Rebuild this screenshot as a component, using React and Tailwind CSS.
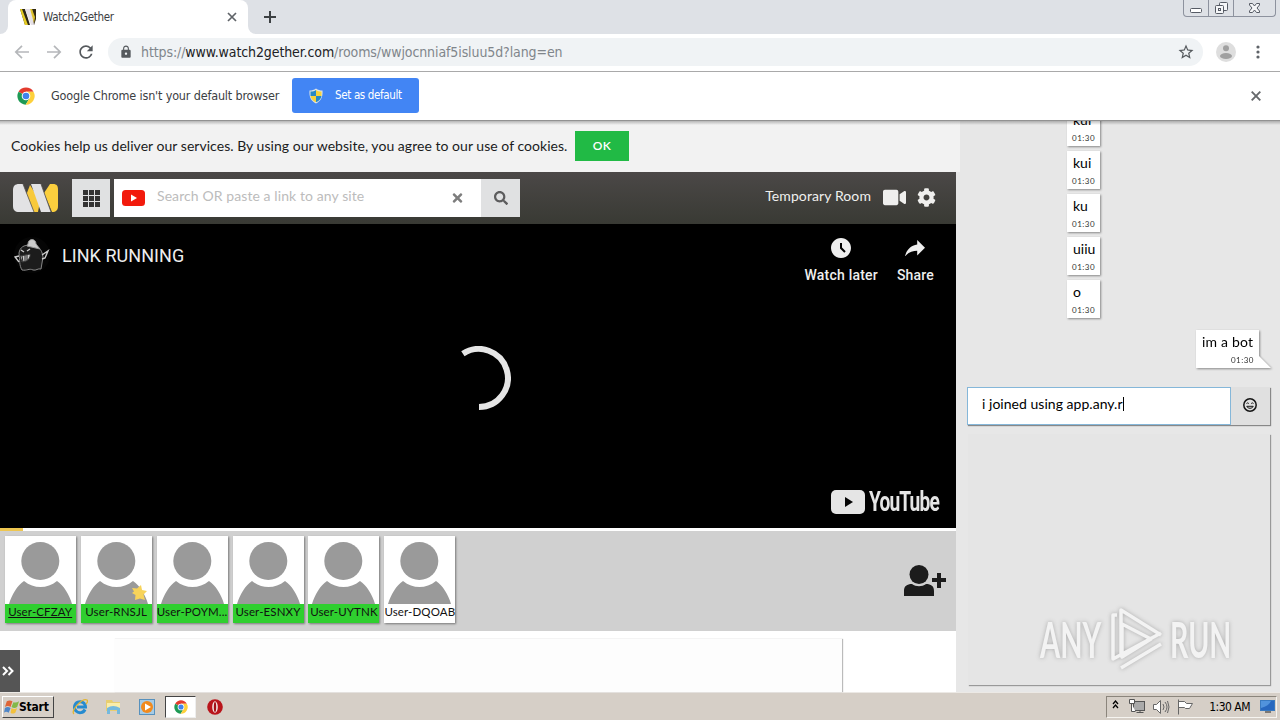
import React from "react";
import { FaCog, FaSearch, FaTimes, FaVideo } from "react-icons/fa";
import { MdAccessTimeFilled, MdLock, MdRefresh, MdStarBorder } from "react-icons/md";

const USERS = [
  { name: "User-CFZAY", online: true, me: true },
  { name: "User-RNSJL", online: true, leader: true },
  { name: "User-POYM...", online: true },
  { name: "User-ESNXY", online: true },
  { name: "User-UYTNK", online: true },
  { name: "User-DQOAB", online: false },
];

const MESSAGES = ["kui", "kui", "ku", "uiiu", "o"];

const ChromeLogo = ({ className }) => (
  <svg className={className} viewBox="0 0 48 48">
    <circle cx="24" cy="24" r="23" fill="#fff" />
    <path d="M24 24 4.1 12.5A23 23 0 0 1 43.9 12.5H24Z" fill="#e33b2e" />
    <path d="M24 24 4.1 12.5A23 23 0 0 0 23 47l11-18Z" fill="#1e9a55" />
    <path d="M24 12.5h19.9A23 23 0 0 1 23 47l11-18Z" fill="#fdd03b" />
    <circle cx="24" cy="24" r="11.5" fill="#fff" />
    <circle cx="24" cy="24" r="8.8" fill="#3f83ec" />
  </svg>
);

const Arrow = ({ flip }) => (
  <svg className={flip ? "w-4 h-4 rotate-180" : "w-4 h-4"} viewBox="0 0 16 16" fill="none" stroke="#b5b7ba" strokeWidth="1.7">
    <path d="M15 8H2M8 1.8 1.8 8 8 14.2" />
  </svg>
);

const TabStrip = () => (
  <div className="h-[34px] flex bg-[#dee1e6]">
    <div className="w-2 h-full bg-white">
      <div className="h-full bg-[#dee1e6] rounded-br-lg" />
    </div>
    <div className="w-[240px] h-full bg-white rounded-t-lg flex items-center pl-3 pr-[11px]">
      <svg className="w-4 h-4 shrink-0" viewBox="0 0 16 16">
        <path d="M0 0h5l5 16H5Z" fill="#2c2716" />
        <path d="M0 0h2l6 16H5Z" fill="#e4cb24" />
        <path d="M5 0h5l5 16h-4Z" fill="#e5e0e6" />
        <path d="M12 0h4v10l-2 6Z" fill="#302814" />
        <path d="M10 0h2l3 8-1 6Z" fill="#dcc02d" />
      </svg>
      <span className="ml-[7px] text-[11.5px] leading-4 tracking-[-0.3px] text-[#3c4043]">Watch2Gether</span>
      <svg className="w-[10px] h-[10px] ml-auto" viewBox="0 0 10 10" stroke="#5f6368" strokeWidth="1.7">
        <path d="m1 1 8 8M9 1 1 9" />
      </svg>
    </div>
    <div className="w-2 h-full bg-white">
      <div className="h-full bg-[#dee1e6] rounded-bl-lg" />
    </div>
    <svg className="w-3 h-3 mt-[11px] ml-2" viewBox="0 0 12 12" stroke="#3c4043" strokeWidth="2">
      <path d="M6 0v12M0 6h12" />
    </svg>
    <div className="ml-auto mr-1 w-[93px] h-[17px] flex border border-t-0 border-[#8d929e] rounded-b text-[#565b65]">
      <div className="w-[25px] border-r border-[#8d929e] flex justify-center">
        <svg className="w-3 h-4" viewBox="0 0 12 16" fill="#fff" stroke="currentColor">
          <rect x=".5" y="8.5" width="11" height="4" rx="1" />
        </svg>
      </div>
      <div className="w-[25px] border-r border-[#8d929e] flex justify-center">
        <svg className="w-[13px] h-4" viewBox="0 0 13 16" fill="#f5f6f8" stroke="currentColor">
          <rect x="4.5" y="2.5" width="8" height="8" rx="1" />
          <rect x=".5" y="5.5" width="8" height="8" rx="1" />
          <rect x="3.5" y="8.5" width="2" height="2" />
        </svg>
      </div>
      <div className="flex-1 flex justify-center">
        <svg className="w-[11px] h-4" viewBox="0 0 11 16" fill="#f5f6f8" stroke="currentColor">
          <path d="M.5 3.5h3l2 2.5 2-2.5h3V5L8 8l2.5 3v1.5h-3l-2-2.5-2 2.5h-3V11L3 8 .5 5Z" />
        </svg>
      </div>
    </div>
  </div>
);

const Toolbar = () => (
  <div className="h-[38px] flex items-center bg-white border-b border-[#a9a9aa]">
    <div className="flex items-center gap-4 pl-[14px] mb-px">
      <Arrow />
      <Arrow flip />
      <MdRefresh className="w-5 h-5 -ml-[2px] text-[#55595d]" />
    </div>
    <div className="ml-3 w-[1095px] h-7 mb-px rounded-full bg-[#f0f3f5] flex items-center pl-[11px] pr-2">
      <MdLock className="w-[14px] h-[14px] mb-px text-[#55595d]" />
      <span className="ml-2 mb-px text-[14px] leading-5 tracking-[-0.1px] text-[#80868b] whitespace-nowrap">
        https://<span className="text-[#202124]">www.watch2gether.com</span>/rooms/wwjocnniaf5isluu5d?lang=en
      </span>
      <MdStarBorder className="w-[18px] h-[18px] ml-auto mb-px text-[#55595d]" />
    </div>
    <svg className="w-5 h-5 ml-[13px] mb-[2px]" viewBox="0 0 20 20">
      <circle cx="10" cy="10" r="10" fill="#dedede" />
      <circle cx="10" cy="6.3" r="3" fill="#a0a0a0" />
      <ellipse cx="10" cy="14" rx="6" ry="3" fill="#a0a0a0" />
    </svg>
    <svg className="w-1 h-4 ml-5 mb-px" viewBox="0 0 4 16" fill="#5f6368">
      <circle cx="2" cy="3" r="1.6" />
      <circle cx="2" cy="8" r="1.6" />
      <circle cx="2" cy="13" r="1.6" />
    </svg>
  </div>
);

const InfoBar = () => (
  <div className="h-[49px] flex items-center bg-white border-b border-[#929292] pl-[17px] pr-[19px]">
    <ChromeLogo className="w-[18px] h-[18px]" />
    <span className="ml-4 w-[241px] mb-px text-[12.5px] leading-5 tracking-[-0.17px] text-[#3c4043] whitespace-nowrap">
      Google Chrome isn't your default browser
    </span>
    <button className="w-[127px] h-[35px] mb-px rounded-[3px] bg-[#4285f4] flex items-center pl-4 text-white text-[11.5px] tracking-[-0.35px] whitespace-nowrap">
      <svg className="w-4 h-4 mr-[11px]" viewBox="0 0 16 16">
        <path d="M8 .5C6 2 4 2.5 1.500 2.500 1 9 3 13 8 15.500 13 13 15 9 14.500 2.500 12 2.500 10 2 8 .5Z" fill="#dde4e6" />
        <path d="M8 2v6H2.500V3.500C5 3.500 6.500 3 8 2Z" fill="#2788c6" />
        <path d="M8 2v6h5.500V3.500C11 3.500 9.500 3 8 2Z" fill="#f6d23c" />
        <path d="M8 8v6.300C5 13 3 11 2.500 8Z" fill="#f6d23c" />
        <path d="M8 8v6.300C11 13 13 11 13.500 8Z" fill="#2788c6" />
      </svg>
      Set as default
    </button>
    <svg className="w-[10px] h-[10px] ml-auto" viewBox="0 0 10 10" stroke="#66696c" strokeWidth="1.9">
      <path d="m.7.7 8.6 8.6M9.3.7.7 9.3" />
    </svg>
  </div>
);

const RoomHeader = () => (
  <div className="w-[956px] h-[52px] bg-linear-to-b from-[#4b4847] to-[#393a34] flex items-center pl-[13px]">
    <svg className="w-[46px] h-7" viewBox="0 0 46 28">
      <path d="M17 1 12 14l7 14h6l2-11Z" fill="#f8c93b" />
      <path d="M37 0h3c4 0 5 2 5 6v16c0 4-2 6-6 6l-8-19Z" fill="#fbcf3e" />
      <path d="M6 0h4l11 28H6c-4 0-6-2-6-6V6c0-4 2-6 6-6Z" fill="#e2e2e4" />
      <path d="M18 0h10l10 28H28Z" fill="#e2e2e4" />
      <path d="m10 0 11 28M28 0l10 28" stroke="#55524e" strokeWidth=".8" />
    </svg>
    <div className="ml-[13px] w-[38px] h-[38px] bg-[#e0e1e2] flex items-center justify-center">
      <svg className="w-[17px] h-[17px]" viewBox="0 0 17 17" fill="#333">
        <path d="M0 0h5v5H0zM6 0h5v5H6zM12 0h5v5h-5zM0 6h5v5H0zM6 6h5v5H6zM12 6h5v5h-5zM0 12h5v5H0zM6 12h5v5H6zM12 12h5v5h-5z" />
      </svg>
    </div>
    <div className="ml-1 w-[367px] h-[38px] bg-white flex items-center pl-2 pr-[18px]">
      <svg className="w-[23px] h-4" viewBox="0 0 23 16">
        <rect width="23" height="16" rx="3.5" fill="#f21a0c" />
        <path d="M9 4.5v7l6-3.5Z" fill="#fff" />
      </svg>
      <span className="ml-3 mb-[5px] text-[14px] tracking-[0.09px] text-[#bcbcbc]">Search OR paste a link to any site</span>
      <FaTimes className="w-[11px] h-[14px] ml-auto text-[#7d7d7d]" />
    </div>
    <div className="w-[39px] h-[38px] bg-[#e0e1e2] flex items-center justify-center">
      <FaSearch className="w-[14px] h-[14px] text-[#5c5c5d]" />
    </div>
    <span className="ml-auto mb-[5px] text-[14px] tracking-[0.1px] text-[#f0f0ee]">Temporary Room</span>
    <FaVideo className="w-[23px] h-[21px] ml-3 mb-px text-[#efefed]" />
    <FaCog className="w-[19px] h-[19px] ml-[11px] mr-5 mb-px text-[#efefed]" />
  </div>
);

const ChannelAvatar = () => (
  <svg className="w-9 h-9" viewBox="0 0 36 36" fill="none" stroke="#aaa">
    <circle cx="18" cy="18" r="18" fill="#050505" stroke="none" />
    <path d="M5 16c1-6 5-8 11-8 8 0 12 4 13 12l-2 12c-3-1-5 2-8 1-4-2-6 1-11 0-3-5-2-9-3-17Z" fill="#1c1c1c" stroke="#888" />
    <path d="M14 7c0-6 8-6 8 0l4 5-13-3Z" fill="#ccc" stroke="#999" />
    <path d="m5 19-4 1 4 5M28 18l6-4-3 7-3 1M7 13l3 2M13 14l3-2" strokeWidth="1.4" stroke="#ccc" />
    <path d="m6 19 10-2c1 4-3 8-8 8Z" fill="#ccc" stroke="#333" />
    <path d="m8 19 1 6m2-7v6m2-6v5" stroke="#222" />
  </svg>
);

const Player = () => (
  <div className="w-[956px] h-[304px] bg-black text-[#eee] font-[Roboto,sans-serif] [font-stretch:normal] flex flex-col">
    <div className="h-[60px] flex items-start pt-[13px] pl-[14px] pr-[22px]">
      <ChannelAvatar />
      <span className="ml-3 mt-[7px] text-[18px] leading-6 tracking-[0.05px]">LINK RUNNING</span>
      <div className="ml-auto flex flex-col items-center text-[14px] leading-5 font-medium tracking-[0.2px]">
        <MdAccessTimeFilled className="w-6 h-6 mb-[5px] -mt-px" />
        Watch later
      </div>
      <div className="ml-[19px] flex flex-col items-center text-[14px] leading-5 font-medium tracking-[0.2px]">
        <svg className="w-5 h-4 mt-[3px] mb-[9px]" viewBox="8 9.7 20 16" fill="currentColor">
          <path d="M20.200 14.190V9.740L28 17.530l-7.800 7.560v-4.560c-3.930.160-8.100 1.280-10.860 4.230-.540.370-1.740 2.530-1.220.890.960-4.330 3.680-8.470 7.860-10.270 1.330-.600 2.760-.980 4.220-1.190Z" />
        </svg>
        Share
      </div>
    </div>
    <div className="pl-[446.500px] mt-[62px]">
      <svg className="w-16 h-16" viewBox="0 0 64 64" fill="none" stroke="#e5e5e5" strokeWidth="6">
        <path d="M15.900 7.800A29 29 0 1 1 32 61" />
      </svg>
    </div>
    <div className="mt-auto mb-[12px] ml-[831px] flex items-center text-[#e5e5e5]">
      <svg className="w-[34px] h-6" viewBox="0 0 34 24">
        <rect width="34" height="24" rx="5" fill="currentColor" />
        <path d="M14 7v10l8-5Z" fill="#050505" />
      </svg>
      <span className="ml-1 w-[71px] h-7 flex items-center text-[27px] leading-7 font-bold tracking-[-1.2px]">
        <span className="origin-left scale-x-[0.71]">YouTube</span>
      </span>
    </div>
  </div>
);

const UserCard = ({ user }) => (
  <div className="relative w-[71px] h-[87px] bg-white shadow-[1px_1px_2px_#777] flex flex-col">
    <svg className="w-[71px] h-[68px]" viewBox="0 0 71 68" fill="#9a9a9a">
      <circle cx="35.3" cy="25" r="19" />
      <path d="M4 68c3-10 8-18 15-23 10 8 23 8 33 0 7 5 12 13 15 23Z" />
    </svg>
    <div
      className={`flex-1 flex justify-center text-[11.5px] leading-[15px] tracking-[0.12px] text-[#111] whitespace-nowrap ${
        user.online ? "bg-[#2fcf2f]" : "bg-white"
      } ${user.me ? "underline" : ""}`}
    >
      {user.name}
    </div>
    {user.leader && (
      <svg className="absolute left-[50px] top-[49px] w-4 h-4" viewBox="0 0 16 16" fill="#f7d35a">
        <path d="m1 3 5 .5L10 0l1 5 5 1-3.500 3.500L14 15l-5-1.500L4 15l.5-5L1 8l2-1.500Z" />
      </svg>
    )}
  </div>
);

const UserStrip = () => (
  <div className="w-[956px] h-[100px] bg-[#d0d0d0] flex pt-[4.500px] pl-[4.700px]">
    <div className="flex gap-[4.950px]">
      {USERS.map((user) => (
        <UserCard key={user.name} user={user} />
      ))}
    </div>
    <svg className="w-[43px] h-[31px] ml-auto mr-[9px] mt-[29px]" viewBox="0 0 43 31" fill="#1c1c1c">
      <circle cx="15" cy="9.5" r="9.5" />
      <path d="M0 31v-5c0-5 3-7 8-7 4 3 10 3 14 0 5 0 8 2 8 7v5ZM33 8h4v5h5v4h-5v6h-4v-6h-5v-4h5Z" />
    </svg>
  </div>
);

const Room = () => (
  <div className="w-[960px] flex flex-col font-[Lato,sans-serif]">
    <div className="h-[51px] bg-[#f2f2f2] flex items-center pl-[11px] pb-[2px]">
      <span className="w-[564px] pb-px text-[14px] tracking-[0.035px] text-[#1b1c1d] whitespace-nowrap">
        Cookies help us deliver our services. By using our website, you agree to our use of cookies.
      </span>
      <button className="w-[54px] h-[30px] bg-[#21ba45] text-white text-[12px] font-semibold tracking-[0.3px]">OK</button>
    </div>
    <RoomHeader />
    <Player />
    <div className="w-[956px] h-[3px] bg-white">
      <div className="w-[23px] h-full bg-[#eec650]" />
    </div>
    <UserStrip />
    <div className="w-[956px] flex-1 bg-white flex items-end">
      <div className="w-5 h-[42px] bg-[#555] flex items-center pl-[2px]">
        <svg className="w-3 h-[10px]" viewBox="0 0 12 10" fill="none" stroke="#fff" strokeWidth="2">
          <path d="m1 1 4 4-4 4M6.500 1l4 4-4 4" />
        </svg>
      </div>
      <div className="ml-[94px] w-[728px] h-[53px] bg-[#fdfdfd] shadow-[1px_0_1px_#bbb]" />
    </div>
  </div>
);

const Watermark = () => (
  <div className="flex items-center text-[#f3f3f3] text-[50px] leading-[64px] font-bold drop-shadow-[0_0_2px_#aaa]">
    <span className="w-[64px] whitespace-nowrap">
      <span className="inline-block origin-left scale-x-[0.58]">ANY</span>
    </span>
    <svg className="w-[58px] h-[64px] mx-1" viewBox="0 0 58 64" fill="none" stroke="#f3f3f3" strokeWidth="3.5" strokeLinejoin="round">
      <path d="M13 47V3l40 25M9 8H5v44l48-26M14 17l29 15L14 50ZM13 61l40-24" />
    </svg>
    <span className="w-[64px] whitespace-nowrap">
      <span className="inline-block origin-left scale-x-[0.57]">RUN</span>
    </span>
  </div>
);

const Chat = () => (
  <div className="flex-1 flex flex-col pl-[7px] text-[14px] text-black font-[Lato,sans-serif]">
    <div className="h-[197px] -mb-1 pb-1 box-content overflow-hidden flex flex-col justify-end gap-[5px] pl-[100px]">
      {MESSAGES.map((text, i) => (
        <div key={i} className="w-[33px] h-[38px] shrink-0 bg-white pl-[6px] pt-[2px] shadow-[1px_1px_2px_#888]">
          <p className="leading-5">{text}</p>
          <p className="-ml-px text-[8px] leading-4 tracking-[0.5px] text-[#333]">01:30</p>
        </div>
      ))}
    </div>
    <div className="mt-3 ml-[229px] flex items-end drop-shadow-[1px_1px_1px_#888]">
      <div className="w-[63px] h-[38px] bg-white px-[6px] pt-[2px]">
        <p className="leading-5 tracking-[0.2px] whitespace-nowrap">im a bot</p>
        <p className="-mr-px text-[8px] leading-4 tracking-[0.5px] text-right text-[#333]">01:30</p>
      </div>
      <svg className="w-3 h-3" viewBox="0 0 12 12" fill="#fff">
        <path d="M0 0v12h12Z" />
      </svg>
    </div>
    <div className="mt-[19px] w-[303px] h-[38px] flex bg-[#e0e0e0] shadow-[1px_1px_1px_#888]">
      <div className="w-[264px] bg-white border border-[#85b7d9] flex items-center pl-[14px] pb-[5px]">
        <span className="tracking-[0.03px]">i joined using app.any.r</span>
        <span className="w-px h-[14px] bg-black" />
      </div>
      <div className="flex-1 flex items-center pl-3 pb-[2px]">
        <svg className="w-[14px] h-[14px]" viewBox="0 0 14 14" fill="none" stroke="#151515" strokeWidth="1.5">
          <circle cx="7" cy="7" r="6.2" />
          <path d="M3.500 5.500q1-1.200 2.300 0M8.200 5.500q1.200-1.200 2.300 0M3.800 8.300h6.400c-.8 2.600-5.600 2.600-6.400 0Z" strokeWidth="1" />
        </svg>
      </div>
    </div>
    <div className="mt-[9px] ml-px w-[302px] h-[251px] bg-[#e5e5e5] shadow-[1px_1px_1px_#999] flex items-end justify-end pr-9 pb-[14px]">
      <Watermark />
    </div>
  </div>
);

const Taskbar = () => (
  <div className="h-7 shrink-0 bg-[#d6cfc7] border-t border-[#ece9e5] flex items-center pl-[2px]">
    <button className="w-[52px] h-[22px] bg-[#d6cfc7] border border-t-white border-l-white border-r-[#444] border-b-[#444] flex items-center pl-px text-[12px] font-bold tracking-[-0.2px] text-black">
      <svg className="w-4 h-4 -mr-px shrink-0" viewBox="0 0 17 16">
        <path d="M3 2q3-2 6 0L7 8Q4 6 1 8Z" fill="#df6537" />
        <path d="M10 3q3 1 6-1l-2 6q-3 2-6 0Z" fill="#83b848" />
        <path d="M1 9q3-2 6 0l-2 5q-3-2-5 0Z" fill="#4f86c7" />
        <path d="M8 9q3 2 6 0l-2 5q-3 2-5 0Z" fill="#f2c03c" />
      </svg>
      Start
    </button>
    <div className="flex items-center ml-[18px]">
      <svg className="w-4 h-4" viewBox="0 0 16 16" fill="none">
        <path d="M13 10.500A5.500 5.500 0 1 1 13.500 8H5" stroke="#268bd0" strokeWidth="3" />
        <path d="M2 15C-2 12 10-1 15 1c1 1 0 3-1 4" stroke="#e2b532" strokeWidth="1.3" />
      </svg>
      <svg className="w-[17px] h-4 ml-[17px]" viewBox="0 0 17 16">
        <path d="M1 1h6l1 2h7v9H1Z" fill="#e8ce70" />
        <path d="M2 4h13v5H2Z" fill="#faedaa" />
        <path d="M2 15V9q6-4 13 0v6h-3v-4H5v4Z" fill="#75b9dd" />
      </svg>
      <svg className="w-4 h-4 ml-[17px]" viewBox="0 0 16 16">
        <rect x=".5" y=".5" width="15" height="15" fill="#a6cbe5" stroke="#5791bd" />
        <circle cx="8" cy="8" r="6" fill="#f18a1d" />
        <path d="M6 4.500v7L12 8Z" fill="#fff" />
      </svg>
      <div className="w-[31px] h-[22px] ml-[10px] bg-white border border-t-[#444] border-l-[#444] border-[#eee] flex items-center justify-center">
        <ChromeLogo className="w-[14px] h-[14px]" />
      </div>
      <svg className="w-4 h-4 ml-[11px]" viewBox="0 0 16 16">
        <circle cx="8" cy="8" r="7.8" fill="#b9141b" />
        <ellipse cx="8" cy="8" rx="2.8" ry="5.8" fill="#f4e8e6" />
        <ellipse cx="8" cy="8" rx="1.2" ry="5" fill="#a30f16" />
      </svg>
    </div>
    <div className="ml-auto mr-[3px] w-[171px] h-[22px] border border-t-[#8b857c] border-l-[#8b857c] border-[#f6f4f0] flex items-center pl-[5px] pr-px">
      <svg className="w-[7px] h-[9px] mb-1" viewBox="0 0 7 9" fill="none" stroke="#000" strokeWidth="1.3">
        <path d="m1 4 2.500-3L6 4M1 8l2.500-3L6 8" />
      </svg>
      <svg className="w-4 h-4 ml-[10px]" viewBox="0 0 16 16" fill="#fff" stroke="#555">
        <rect x="4.5" y="2.5" width="11" height="9" fill="#aaa" />
        <path d="M.5.5h5v4h-5zM2.500 4.500v8h4M7.500 13.500h7M11 11.500v2" />
      </svg>
      <svg className="w-[17px] h-4 ml-2" viewBox="0 0 17 16" fill="#fff" stroke="#666">
        <path d="M.5 5.500h3l4-4v13l-4-4h-3Z" />
        <path d="M10 5q2 3 0 6M12 3q4 5 0 10M14.500 2q3 6 0 12" fill="none" />
      </svg>
      <svg className="w-4 h-4 ml-[7px]" viewBox="0 0 16 16" fill="#fff" stroke="#666">
        <path d="M1.500.5v15M1.500 2.500h6l2 2h6l-3 5h-4l-1-1h-6Z" />
      </svg>
      <span className="ml-auto text-[12px] tracking-[-0.5px] text-black whitespace-nowrap">1:30 AM</span>
      <svg className="w-[15px] h-[13px] ml-[10px]" viewBox="0 0 15 13">
        <rect x=".5" y=".5" width="14" height="10" fill="#2868bf" stroke="#397ac0" />
        <path d="M1 1h10q-2 5-10 7Z" fill="#5193dc" />
        <path d="M5 12h6" stroke="#222" />
      </svg>
    </div>
  </div>
);

const App = () => (
  <div className="w-[1280px] h-[720px] overflow-hidden flex flex-col font-['DejaVu_Sans_Condensed','DejaVu_Sans',sans-serif] [font-stretch:condensed]">
    <TabStrip />
    <Toolbar />
    <InfoBar />
    <div className="relative flex-1 min-h-0 flex bg-[#e7e7e7]">
      <Room />
      <Chat />
      {/* shadow of the browser chrome over the page */}
      <div className="absolute top-0 left-0 w-full h-1 bg-linear-to-b from-black/25 to-transparent" />
    </div>
    <Taskbar />
  </div>
);

export default App;
